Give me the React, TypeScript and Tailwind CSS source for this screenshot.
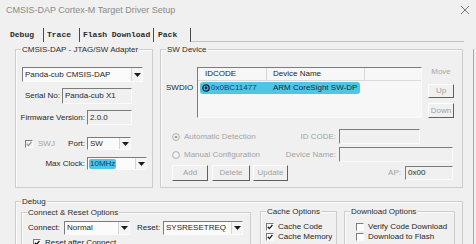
import type { ReactNode } from 'react';

const sunken =
  'border border-t-[#7c7c7c] border-l-[#7c7c7c] border-r-[#fbfbfb] border-b-[#fbfbfb]';
const raised =
  'border border-t-[#fdfdfd] border-l-[#fdfdfd] border-r-[#5f5f5f] border-b-[#5f5f5f]';

const Group = ({ label, className, children }: { label: string; className: string; children?: ReactNode }) => (
  <div className={`relative border border-[#cdcdcd] shadow-[inset_1px_1px_0_#fbfbfb] ${className}`}>
    <span className="absolute -top-[6px] left-[5px] bg-[#f0f0f0] px-[1px] leading-[11px] text-[#2e2e2e]">
      {label}
    </span>
    {children}
  </div>
);

const Arrow = () => (
  <div className="ml-auto flex h-full w-[11px] items-center justify-center border-l border-[#d4d4d4] bg-[#f4f4f4]">
    <svg width="7" height="4" viewBox="0 0 7 4">
      <polygon points="0,0 7,0 3.5,4" fill="#1b1b1b" />
    </svg>
  </div>
);

const Select = ({ className, children }: { className: string; children: ReactNode }) => (
  <div className={`flex items-center bg-[#fbfbfb] ${sunken} ${className}`}>
    <span className="truncate pl-[2px] text-[#262626]">{children}</span>
    <Arrow />
  </div>
);

const Check = ({ checked, disabled }: { checked?: boolean; disabled?: boolean }) => (
  <span
    className={`flex h-[8px] w-[8px] shrink-0 items-center justify-center ${sunken} ${
      disabled ? 'bg-[#f0f0f0]' : 'bg-[#fdfdfd]'
    }`}
  >
    {checked && (
      <svg width="6" height="6" viewBox="0 0 6 6">
        <path
          d="M0.8 2.8 L2.4 4.6 L5.4 1"
          fill="none"
          stroke={disabled ? '#9a9a9a' : '#1c1c1c'}
          strokeWidth="1.3"
        />
      </svg>
    )}
  </span>
);

const Radio = ({ checked }: { checked?: boolean }) => (
  <svg width="8" height="8" viewBox="0 0 8 8" className="shrink-0">
    <circle cx="4" cy="4" r="3.4" fill="#f4f4f4" stroke="#a5a5a5" strokeWidth="0.9" />
    {checked && <circle cx="4" cy="4" r="1.3" fill="#9c9c9c" />}
  </svg>
);

const Button = ({ className, children }: { className: string; children: ReactNode }) => (
  <div className={`flex items-center justify-center text-[#a3a3a3] ${raised} ${className}`}>{children}</div>
);

export default function App() {
  return (
    <div className="h-[244px] w-[476px] overflow-hidden bg-[#f0f0f0] font-['Liberation_Sans',Arial,sans-serif] text-[8px] leading-none text-[#262626]">
      {/* title */}
      <div className="flex h-[20px] items-center justify-between pl-[6px] pr-[7px]">
        <span className="text-[9px] text-[#8a8a8a]">CMSIS-DAP Cortex-M Target Driver Setup</span>
        <svg width="8" height="8" viewBox="0 0 8 8">
          <path d="M0 0 L8 8 M8 0 L0 8" stroke="#6a6a6a" strokeWidth="0.9" />
        </svg>
      </div>

      {/* tabs */}
      <div className="flex h-[22px] items-end font-['Liberation_Mono',monospace] text-[8px] font-bold text-[#2a2a2a]">
        <div className="flex h-[14px] w-[44px] items-center border-r border-[#4a4a4a] pl-[10px]">Debug</div>
        <div className="flex h-[14px] w-[36px] items-center border-r border-[#4a4a4a] pl-[3px]">Trace</div>
        <div className="flex h-[14px] w-[74px] items-center border-r border-[#4a4a4a] pl-[3px]">Flash Download</div>
        <div className="flex h-[14px] w-[37px] items-center border-r border-[#4a4a4a] pl-[4px]">Pack</div>
        <div className="mr-[12px] flex-1 border-b border-[#c4c4c4]" />
      </div>

      {/* panel */}
      <div className="h-[202px] w-[474px] border-r border-[#a9a9a9]">
        <div className="mt-[7px] flex">
          {/* adapter */}
          <Group label="CMSIS-DAP - JTAG/SW Adapter" className="ml-[15px] h-[139px] w-[138px]">
            <Select className="ml-[6px] mt-[17px] h-[15px] w-[121px]">Panda-cub CMSIS-DAP</Select>
            <div className="mt-[6px] flex h-[16px] items-center">
              <span className="w-[44px] text-right">Serial No:</span>
              <div className={`ml-[2px] flex h-full w-[70px] items-center pl-[2px] ${sunken}`}>Panda-cub X1</div>
            </div>
            <div className="mt-[6px] flex h-[15px] items-center">
              <span className="w-[69px] text-right">Firmware Version:</span>
              <div className={`ml-[2px] flex h-full w-[45px] items-center pl-[2px] ${sunken}`}>2.0.0</div>
            </div>
            <div className="mt-[12px] flex h-[13px] items-center">
              <span className="ml-[9px]">
                <Check checked disabled />
              </span>
              <span className="ml-[5px] w-[25px] text-[#a3a3a3]">SWJ</span>
              <span className="w-[22px] text-right">Port:</span>
              <Select className="ml-[2px] h-full w-[44px]">SW</Select>
            </div>
            <div className="mt-[7px] flex h-[13px] items-center">
              <span className="w-[69px] text-right">Max Clock:</span>
              <div className={`ml-[2px] flex h-full w-[60px] items-center bg-[#fbfbfb] ${sunken}`}>
                <span className="ml-[1px] rounded-[2px] bg-[#4fc6e3] px-[1px] py-[1px] text-[#0e3a78]">10MHz</span>
                <Arrow />
              </div>
            </div>
          </Group>

          {/* sw device */}
          <Group label="SW Device" className="ml-[7px] h-[139px] w-[303px]">
            <div className="flex items-start">
              <span className="ml-[5px] mt-[33px] w-[31px] leading-[10px]">SWDIO</span>
              <div className={`mt-[17px] h-[51px] w-[225px] bg-[#f7f7f7] ${sunken}`}>
                <div className="flex h-[13px] border-b border-[#dadada]">
                  <div className="flex w-[69px] items-center border-r border-[#d6d6d6] pl-[7px]">IDCODE</div>
                  <div className="flex w-[98px] items-center border-r border-[#d6d6d6] pl-[6px]">Device Name</div>
                  <div className="flex-1" />
                </div>
                <div className="mt-[1px] flex h-[12px] items-center">
                  <div className="ml-[2px] flex h-full items-center rounded-[3px] bg-[#4fc6e3] pl-[2px] pr-[3px]">
                    <svg width="8" height="8" viewBox="0 0 8 8" className="shrink-0">
                      <circle cx="4" cy="4" r="3.2" fill="none" stroke="#14233f" strokeWidth="1.3" />
                      <circle cx="4" cy="4" r="1.4" fill="#14233f" />
                    </svg>
                    <span className="ml-[1px] w-[62px] text-[#123e82]">0x0BC11477</span>
                    <span className="text-[#1a2a44]">ARM CoreSight SW-DP</span>
                  </div>
                </div>
              </div>
              <div className="ml-[6px] mt-[17px] flex w-[26px] flex-col items-center">
                <span className="leading-[10px] text-[#a8a8a8]">Move</span>
                <Button className="mt-[7px] h-[14px] w-[26px]">Up</Button>
                <Button className="mt-[5px] h-[15px] w-[26px]">Down</Button>
              </div>
            </div>

            <div className="mt-[11px] flex h-[15px] items-center">
              <div className="ml-[11px] flex w-[98px] items-center text-[#a3a3a3]">
                <Radio checked />
                <span className="ml-[4px]">Automatic Detection</span>
              </div>
              <span className="w-[66px] text-right text-[#a3a3a3]">ID CODE:</span>
              <div className={`ml-[3px] h-full w-[81px] ${sunken}`} />
            </div>
            <div className="mt-[3px] flex h-[15px] items-center">
              <div className="ml-[11px] flex w-[98px] items-center text-[#a3a3a3]">
                <Radio />
                <span className="ml-[4px]">Manual Configuration</span>
              </div>
              <span className="w-[66px] text-right text-[#a3a3a3]">Device Name:</span>
              <div className={`ml-[3px] h-full w-[114px] ${sunken}`} />
            </div>
            <div className="mt-[2px] flex h-[17px] items-center">
              <Button className="ml-[11px] h-[16px] w-[36px]">Add</Button>
              <Button className="ml-[4px] h-[16px] w-[38px]">Delete</Button>
              <Button className="ml-[3px] h-[16px] w-[35px]">Update</Button>
              <span className="ml-auto text-[#a3a3a3]">AP:</span>
              <div className={`ml-[4px] mr-[9px] flex h-[14px] w-[48px] items-center pl-[2px] ${sunken}`}>0x00</div>
            </div>
          </Group>
        </div>

        {/* debug */}
        <Group label="Debug" className="ml-[15px] mt-[13px] h-[60px] w-[448px]">
          <div className="mt-[9px] flex items-start">
            <Group label="Connect & Reset Options" className="ml-[5px] mt-[1px] h-[50px] w-[230px]">
              <div className="mt-[8px] flex h-[14px] items-center">
                <span className="ml-[6px] w-[36px]">Connect:</span>
                <Select className="h-full w-[66px]">Normal</Select>
                <span className="ml-[7px] w-[26px]">Reset:</span>
                <Select className="h-full w-[80px]">SYSRESETREQ</Select>
              </div>
              <div className="mt-[3px] flex h-[10px] items-center">
                <span className="ml-[11px]">
                  <Check checked />
                </span>
                <span className="ml-[4px]">Reset after Connect</span>
              </div>
            </Group>
            <Group label="Cache Options" className="ml-[9px] h-[50px] w-[77px]">
              <div className="mt-[10px] flex h-[10px] items-center pl-[5px]">
                <Check checked />
                <span className="ml-[4px]">Cache Code</span>
              </div>
              <div className="flex h-[10px] items-center pl-[5px]">
                <Check checked />
                <span className="ml-[4px]">Cache Memory</span>
              </div>
            </Group>
            <Group label="Download Options" className="ml-[7px] h-[50px] w-[111px]">
              <div className="mt-[10px] flex h-[10px] items-center pl-[11px]">
                <Check />
                <span className="ml-[4px]">Verify Code Download</span>
              </div>
              <div className="flex h-[10px] items-center pl-[11px]">
                <Check />
                <span className="ml-[4px]">Download to Flash</span>
              </div>
            </Group>
          </div>
        </Group>
      </div>
    </div>
  );
}
